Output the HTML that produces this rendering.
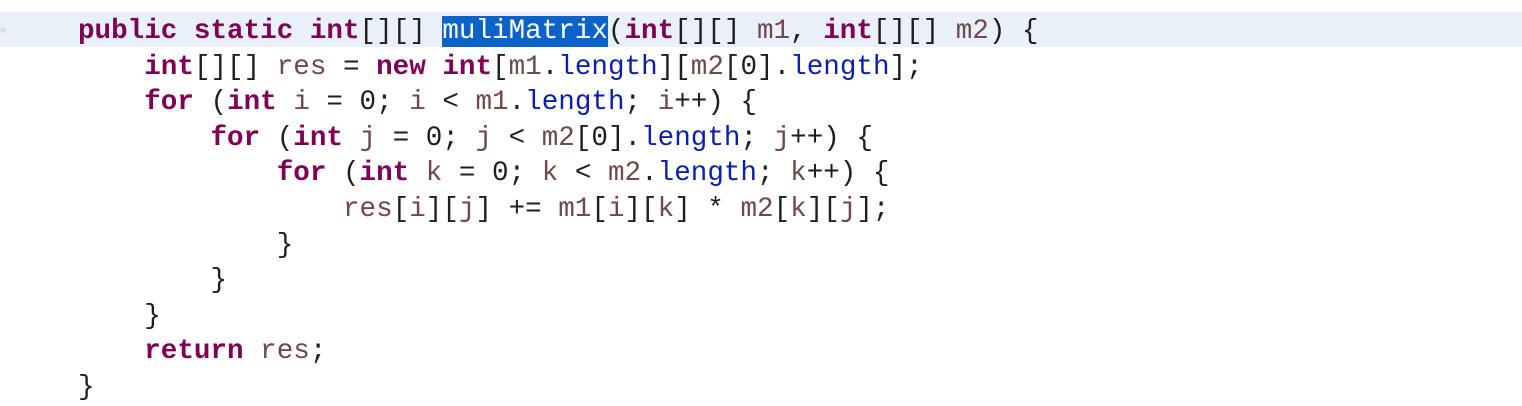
<!DOCTYPE html>
<html><head><meta charset="utf-8"><style>
html,body{margin:0;padding:0;}
body{width:1522px;height:401px;background:#fff;overflow:hidden;position:relative;font-family:"Liberation Mono",monospace;font-size:27.6px;color:#1e1e1e;}
.hl{position:absolute;left:0;top:12px;width:1522px;height:35px;background:#e9f0fa;}
pre{position:absolute;left:78px;top:14px;margin:0;font:inherit;line-height:35.6px;white-space:pre;}
.k{color:#7f0055;font-weight:bold;}
.v{color:#6e4a48;}
.f{color:#0a1eb0;}
.sel{background:#0b62c9;color:#fff;}
.m{position:absolute;left:0;width:6px;height:6px;border-radius:3px;background:#ddd;}
</style></head><body>
<div class="hl"></div>
<div class="m" style="top:27px"></div>
<pre><span class="k">public</span> <span class="k">static</span> <span class="k">int</span>[][] <span class="sel">muliMatrix</span>(<span class="k">int</span>[][] <span class="v">m1</span>, <span class="k">int</span>[][] <span class="v">m2</span>) {
    <span class="k">int</span>[][] <span class="v">res</span> = <span class="k">new</span> <span class="k">int</span>[<span class="v">m1</span>.<span class="f">length</span>][<span class="v">m2</span>[0].<span class="f">length</span>];
    <span class="k">for</span> (<span class="k">int</span> <span class="v">i</span> = 0; <span class="v">i</span> &lt; <span class="v">m1</span>.<span class="f">length</span>; <span class="v">i</span>++) {
        <span class="k">for</span> (<span class="k">int</span> <span class="v">j</span> = 0; <span class="v">j</span> &lt; <span class="v">m2</span>[0].<span class="f">length</span>; <span class="v">j</span>++) {
            <span class="k">for</span> (<span class="k">int</span> <span class="v">k</span> = 0; <span class="v">k</span> &lt; <span class="v">m2</span>.<span class="f">length</span>; <span class="v">k</span>++) {
                <span class="v">res</span>[<span class="v">i</span>][<span class="v">j</span>] += <span class="v">m1</span>[<span class="v">i</span>][<span class="v">k</span>] * <span class="v">m2</span>[<span class="v">k</span>][<span class="v">j</span>];
            }
        }
    }
    <span class="k">return</span> <span class="v">res</span>;
}</pre>
</body></html>
